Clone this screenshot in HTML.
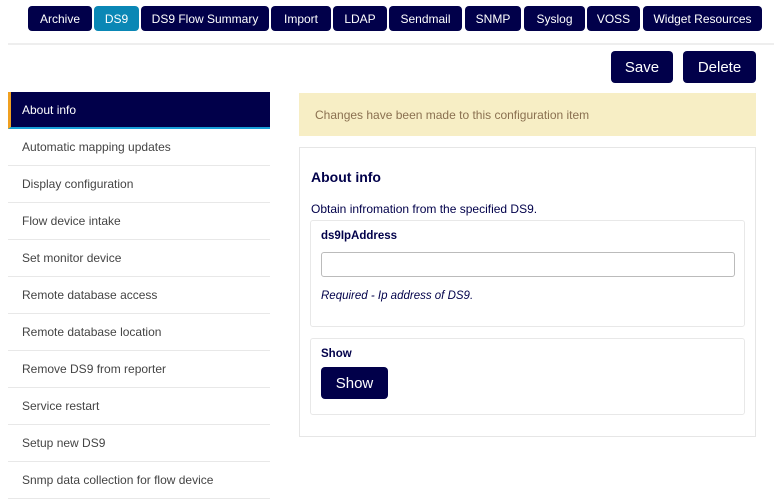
<!DOCTYPE html>
<html><head><meta charset="utf-8"><style>
*{box-sizing:border-box;margin:0;padding:0}
body{width:774px;height:503px;overflow:hidden;background:#fff;font-family:"Liberation Sans",sans-serif;position:relative}
.a{position:absolute}
.tab{position:absolute;top:6px;height:25px;background:#01004a;color:#fff;font-size:12px;border-radius:4px;display:flex;align-items:center;justify-content:center}
.btn{position:absolute;background:#01004a;color:#fff;border-radius:4px;display:flex;align-items:center;justify-content:center;font-size:15px}
.side{position:absolute;left:8px;width:262px;height:37px;border-bottom:1px solid #e8e8e8;font-size:12px;color:#444;padding-left:14px;display:flex;align-items:center}
</style></head><body>
<div class="tab" style="left:28px;width:64px">Archive</div>
<div class="tab" style="left:94px;width:45px;background:#0a87b5">DS9</div>
<div class="tab" style="left:141px;width:128px">DS9 Flow Summary</div>
<div class="tab" style="left:271px;width:60px">Import</div>
<div class="tab" style="left:333px;width:54px">LDAP</div>
<div class="tab" style="left:389px;width:73px">Sendmail</div>
<div class="tab" style="left:465px;width:56px">SNMP</div>
<div class="tab" style="left:524px;width:61px">Syslog</div>
<div class="tab" style="left:587px;width:53px">VOSS</div>
<div class="tab" style="left:643px;width:119px">Widget Resources</div>
<div class="a" style="left:8px;top:43px;width:766px;height:2px;background:#eee"></div>
<div class="btn" style="left:611px;top:51px;width:62px;height:32px">Save</div>
<div class="btn" style="left:683px;top:51px;width:73px;height:32px">Delete</div>

<div class="side" style="top:92px;background:#01004a;color:#fff;border-left:3px solid #f0a020;border-bottom:2px solid #1aa0d8;padding-left:11px">About info</div>
<div class="side" style="top:129px">Automatic mapping updates</div>
<div class="side" style="top:166px">Display configuration</div>
<div class="side" style="top:203px">Flow device intake</div>
<div class="side" style="top:240px">Set monitor device</div>
<div class="side" style="top:277px">Remote database access</div>
<div class="side" style="top:314px">Remote database location</div>
<div class="side" style="top:351px">Remove DS9 from reporter</div>
<div class="side" style="top:388px">Service restart</div>
<div class="side" style="top:425px">Setup new DS9</div>
<div class="side" style="top:462px">Snmp data collection for flow device</div>

<div class="a" style="left:299px;top:93px;width:457px;height:43px;background:#f7eec5;color:#8a7050;font-size:12px;padding-left:16px;display:flex;align-items:center">Changes have been made to this configuration item</div>

<div class="a" style="left:299px;top:147px;width:457px;height:290px;border:1px solid #e6e6e6"></div>
<div class="a" style="left:311px;top:169px;font-size:14px;font-weight:bold;color:#01004a">About info</div>
<div class="a" style="left:311px;top:202px;font-size:12px;color:#01004a">Obtain infromation from the specified DS9.</div>
<div class="a" style="left:310px;top:220px;width:435px;height:107px;border:1px solid #e8e8e8;border-radius:3px"></div>
<div class="a" style="left:321px;top:230px;font-size:11.5px;font-weight:bold;color:#01004a">ds9IpAddress</div>
<div class="a" style="left:321px;top:252px;width:414px;height:25px;border:1px solid #bbb;border-radius:3px"></div>
<div class="a" style="left:321px;top:290px;font-size:11.5px;font-style:italic;color:#01004a">Required - Ip address of DS9.</div>
<div class="a" style="left:310px;top:338px;width:435px;height:77px;border:1px solid #e8e8e8;border-radius:3px"></div>
<div class="a" style="left:321px;top:348px;font-size:11.5px;font-weight:bold;color:#01004a">Show</div>
<div class="btn" style="left:321px;top:367px;width:67px;height:32px">Show</div>
</body></html>
